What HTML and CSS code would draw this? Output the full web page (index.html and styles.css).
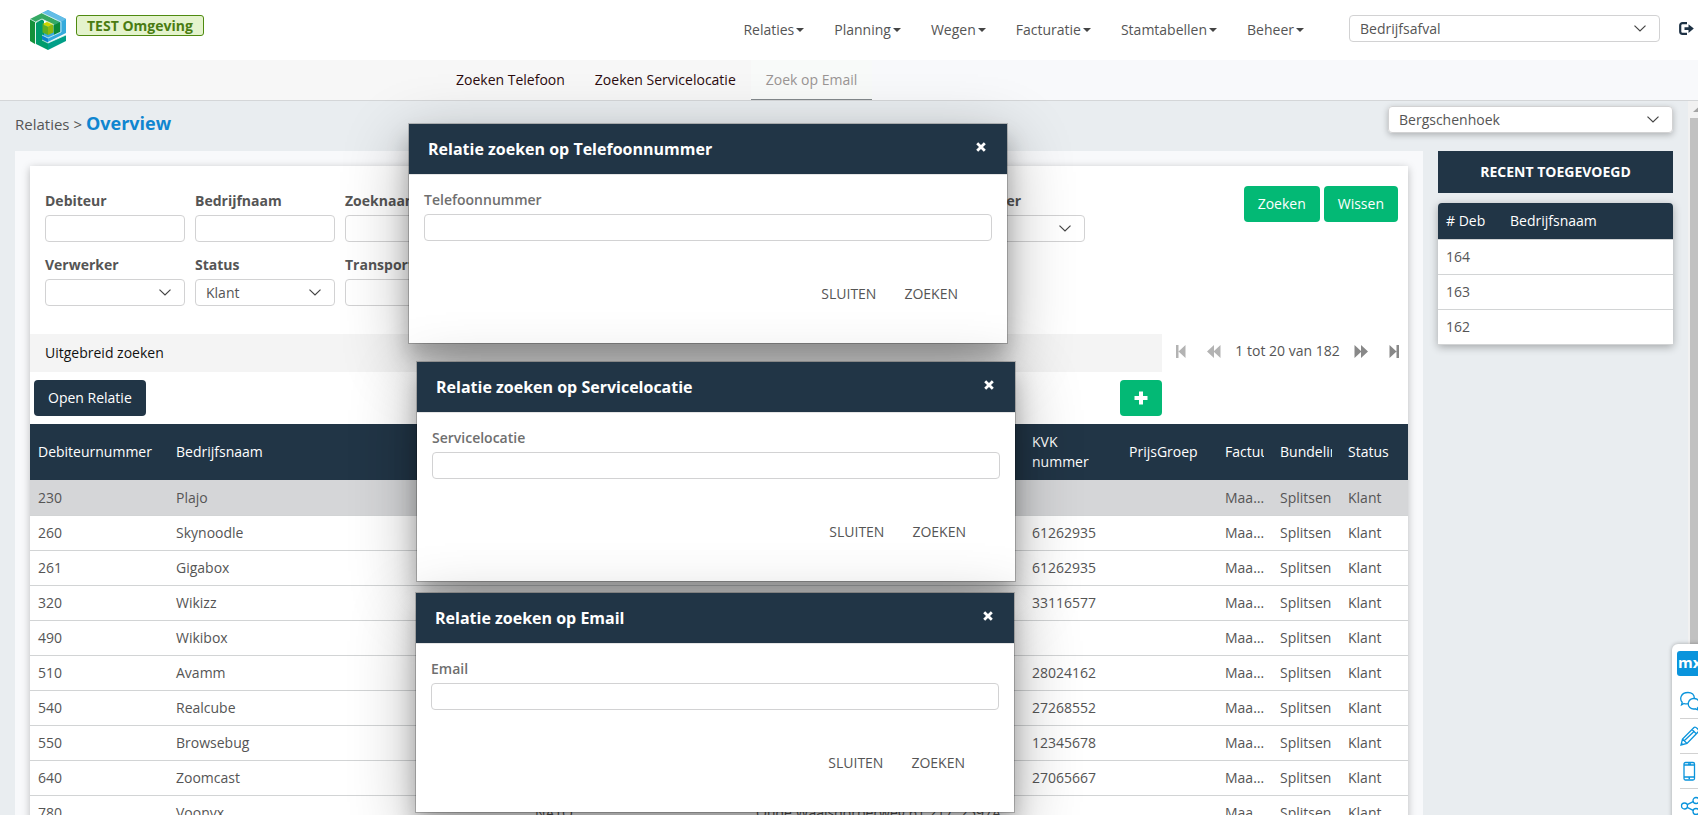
FILE: index.html
```html
<!DOCTYPE html>
<html lang="nl">
<head>
<meta charset="utf-8">
<title>Relaties - Overview</title>
<link rel="stylesheet" href="styles.css">
</head>
<body>
<svg class="defs" width="0" height="0" aria-hidden="true">
  <symbol id="chev" viewBox="0 0 12 7"><path d="M.5.6 6 6l5.500-5.400" fill="none" stroke="#444" stroke-width="1.200"/></symbol>
  <symbol id="cross" viewBox="0 0 10 10"><path d="M1.200 1.200l7.600 7.600M8.800 1.200L1.200 8.800" stroke="#fff" stroke-width="2.800"/></symbol>
</svg>
<header class="topbar">
  <svg class="logo" viewBox="0 0 36 40" width="36" height="40" aria-label="Logo">
    <path d="M18 0 36 9v14L18 32l-6-3V17l6-3 12-5L12 3z" fill="#35aadc"/>
    <path d="M12 3 18 0l18 9-5 3z" fill="#63bde6"/>
    <path d="M0 9 12 3l18 9-6 3-12-6-7 4z" fill="#35a964"/>
    <path d="M0 9l5 3v22l-5-3z" fill="#14913a"/>
    <path d="M6 13l6-4 2 2v18l4 4v7L6 34z" fill="#009b6b"/>
    <path d="M18 33l18-8v6L18 40z" fill="#009f87"/>
    <path d="M24 15l6-3v10l-6 3z" fill="#0b8a38"/>
    <path d="M12 25l6 3v5l-6-4z" fill="#0a80cc"/>
    <path d="M12.500 14 18 11.500l5.500 2.500L18 17z" fill="#cfd500"/>
    <path d="M12.500 14 18 17v8l-5.500-2.500z" fill="#5fae22"/>
    <path d="M23.500 14 18 17v8l5.500-2.500z" fill="#8fb80e"/>
    <path d="M0 9l5.500 3v22M5.500 12 12 9l12 6M12 3l19 9v10L18 28l-6-3M12 30l6 3 18-8" fill="none" stroke="#d9f1ee" stroke-width=".8"/>
  </svg>
  <span class="env">TEST Omgeving</span>
  <nav class="menu">
    <button>Relaties</button><button>Planning</button><button>Wegen</button><button>Facturatie</button><button>Stamtabellen</button><button>Beheer</button>
  </nav>
  <span class="pick stream"><select aria-label="Afvalstroom"><option>Bedrijfsafval</option></select><svg width="12" height="7"><use href="#chev"/></svg></span>
  <button class="logout" aria-label="Uitloggen"><svg width="15" height="13" viewBox="0 0 15 13"><path d="M8 1.100H3.500A2.300 2.300 0 0 0 1.200 3.400v6.200a2.300 2.300 0 0 0 2.300 2.300H8" fill="none" stroke="#1d3144" stroke-width="2.200"/><path d="M5.500 5.200H9.500V2.200l5.300 4.400L9.500 11V8h-4z" fill="#1d3144"/></svg></button>
</header>
<nav class="subnav">
  <a href="#telefoon">Zoeken Telefoon</a>
  <a href="#servicelocatie">Zoeken Servicelocatie</a>
  <a class="active" href="#email">Zoek op Email</a>
</nav>
<div class="body">
  <div class="page">
    <div class="crumbs">
      <div class="trail">Relaties &gt; <h1>Overview</h1></div>
      <span class="pick branch"><select aria-label="Vestiging"><option>Bergschenhoek</option></select><svg width="12" height="7"><use href="#chev"/></svg></span>
    </div>
    <div class="columns">
      <main class="frame">
        <section class="card">
          <form class="filters">
            <div class="fields">
              <div class="field"><label for="f1">Debiteur</label><input id="f1"></div>
              <div class="field"><label for="f2">Bedrijfnaam</label><input id="f2"></div>
              <div class="field"><label for="f3">Zoeknaam</label><input id="f3"></div>
              <div class="field last"><label for="f7">Ontdoener</label><span class="pick"><select id="f7"><option></option></select><svg width="12" height="7"><use href="#chev"/></svg></span></div>
              <div class="field"><label for="f8">Verwerker</label><span class="pick"><select id="f8"><option></option></select><svg width="12" height="7"><use href="#chev"/></svg></span></div>
              <div class="field"><label for="f9">Status</label><span class="pick"><select id="f9"><option>Klant</option></select><svg width="12" height="7"><use href="#chev"/></svg></span></div>
              <div class="field"><label for="f10">Transporteur</label><input id="f10"></div>
            </div>
            <div class="actions"><button class="btn green" type="button">Zoeken</button><button class="btn green" type="button">Wissen</button></div>
          </form>
          <div class="tools">
            <div class="toolsleft">
              <button class="extended">Uitgebreid zoeken</button>
              <div class="gridbtns"><button class="btn navy">Open Relatie</button><button class="btn green add" aria-label="Toevoegen"><svg width="14" height="14" viewBox="0 0 14 14"><path d="M7 .5v13M.5 7h13" stroke="#fff" stroke-width="4"/></svg></button></div>
            </div>
            <div class="pager">
              <button aria-label="Eerste" disabled><svg width="10" height="13" viewBox="0 0 10 13"><path d="M0 0h2.500v13H0zM9.500 0v13L2.500 6.500z"/></svg></button>
              <div class="pages">
                <button aria-label="Vorige" disabled><svg width="14" height="13" viewBox="0 0 14 13"><path d="M7 0v13L0 6.500zM13.500 0v13l-7-6.500z"/></svg></button>
                <span>1 tot 20 van 182</span>
                <button aria-label="Volgende"><svg width="14" height="13" viewBox="0 0 14 13"><path d="M.5 0v13l7-6.500zM7 0v13l7-6.500z"/></svg></button>
              </div>
              <button aria-label="Laatste"><svg width="10" height="13" viewBox="0 0 10 13"><path d="M7.500 0H10v13H7.500zM.5 0v13l7-6.500z"/></svg></button>
            </div>
          </div>
          <table class="grid">
            <colgroup><col class="c1"><col class="c2"><col class="c3"><col class="c4"><col class="c5"><col class="c6"><col class="c7"><col class="c8"><col class="c8"></colgroup>
            <thead><tr><th>Debiteurnummer</th><th>Bedrijfsnaam</th><th></th><th></th><th class="wrap">KVK nummer</th><th>PrijsGroep</th><th><span>Factuur</span></th><th><span>Bundeling</span></th><th>Status</th></tr></thead>
            <tbody>
              <tr class="sel"><td>230</td><td>Plajo</td><td></td><td></td><td></td><td></td><td>Maandelijks</td><td>Splitsen</td><td>Klant</td></tr>
              <tr><td>260</td><td>Skynoodle</td><td></td><td></td><td>61262935</td><td></td><td>Maandelijks</td><td>Splitsen</td><td>Klant</td></tr>
              <tr><td>261</td><td>Gigabox</td><td></td><td></td><td>61262935</td><td></td><td>Maandelijks</td><td>Splitsen</td><td>Klant</td></tr>
              <tr><td>320</td><td>Wikizz</td><td></td><td></td><td>33116577</td><td></td><td>Maandelijks</td><td>Splitsen</td><td>Klant</td></tr>
              <tr><td>490</td><td>Wikibox</td><td></td><td></td><td></td><td></td><td>Maandelijks</td><td>Splitsen</td><td>Klant</td></tr>
              <tr><td>510</td><td>Avamm</td><td></td><td></td><td>28024162</td><td></td><td>Maandelijks</td><td>Splitsen</td><td>Klant</td></tr>
              <tr><td>540</td><td>Realcube</td><td></td><td></td><td>27268552</td><td></td><td>Maandelijks</td><td>Splitsen</td><td>Klant</td></tr>
              <tr><td>550</td><td>Browsebug</td><td></td><td></td><td>12345678</td><td></td><td>Maandelijks</td><td>Splitsen</td><td>Klant</td></tr>
              <tr><td>640</td><td>Zoomcast</td><td></td><td></td><td>27065667</td><td></td><td>Maandelijks</td><td>Splitsen</td><td>Klant</td></tr>
              <tr><td>780</td><td>Voonyx</td><td>NATO</td><td>Oude Waalsdorperweg 61 217, 2597A</td><td></td><td></td><td>Maandelijks</td><td>Splitsen</td><td>Klant</td></tr>
            </tbody>
          </table>
        </section>
      </main>
      <aside class="side">
        <h2>RECENT TOEGEVOEGD</h2>
        <table class="recent">
          <thead><tr><th class="deb"># Deb</th><th>Bedrijfsnaam</th></tr></thead>
          <tbody><tr><td>164</td><td></td></tr><tr><td>163</td><td></td></tr><tr><td>162</td><td></td></tr></tbody>
        </table>
      </aside>
    </div>
  </div>
  <div class="scroll"><svg width="10" height="17" viewBox="0 0 10 17"><path d="M5 11l5-4.500V11z" fill="#a3a3a3"/></svg><div class="thumb"></div></div>
</div>

<div class="dialog d1" role="dialog" aria-labelledby="t1">
  <div class="dhead"><h3 id="t1">Relatie zoeken op Telefoonnummer</h3><button aria-label="Sluit venster"><svg width="10" height="10"><use href="#cross"/></svg></button></div>
  <form class="dbody"><label for="telefoon">Telefoonnummer</label><input id="telefoon"><div class="dfoot"><button type="button">SLUITEN</button><button type="button">ZOEKEN</button></div></form>
</div>
<div class="dialog d2" role="dialog" aria-labelledby="t2">
  <div class="dhead"><h3 id="t2">Relatie zoeken op Servicelocatie</h3><button aria-label="Sluit venster"><svg width="10" height="10"><use href="#cross"/></svg></button></div>
  <form class="dbody"><label for="servicelocatie">Servicelocatie</label><input id="servicelocatie"><div class="dfoot"><button type="button">SLUITEN</button><button type="button">ZOEKEN</button></div></form>
</div>
<div class="dialog d3" role="dialog" aria-labelledby="t3">
  <div class="dhead"><h3 id="t3">Relatie zoeken op Email</h3><button aria-label="Sluit venster"><svg width="10" height="10"><use href="#cross"/></svg></button></div>
  <form class="dbody"><label for="email">Email</label><input id="email"><div class="dfoot"><button type="button">SLUITEN</button><button type="button">ZOEKEN</button></div></form>
</div>

<div class="widget">
  <span class="mx">mx</span>
  <button aria-label="Feedback"><svg width="20" height="20" viewBox="0 0 20 20"><path d="M8.500 12.500c-1.600.6-3.200.6-4.500 0L1.500 14l.7-2.700C-.6 8.200.5 1.500 8 1.500c4 0 6.400 2.400 6.300 5.500"/><path d="M17.500 17c2-1.500 3-4 1.500-6.800-2.500-4-9-3.500-10.500 1-1.200 4.500 2.500 7.500 6.800 6.600l3 1.200z"/></svg></button>
  <button aria-label="Bewerken"><svg width="20" height="20" viewBox="0 0 20 20"><path d="M1 19l1.500-6L14 1.500c1.500-1.500 5.800 2.500 4.300 4.300L7 17.500zM2.500 13l4.500 4.500M12 3.500 16.500 8M4.500 14.500 14.500 5M1.500 17.500l1 1"/></svg></button>
  <button aria-label="Mobiel"><svg width="20" height="20" viewBox="0 0 20 20"><rect x="4" y="1.500" width="10.500" height="17.500" rx="1.500"/><path d="M4 4h10.500M4 16h10.500M8 2.800h3M8.500 17.500h1.500"/></svg></button>
  <button aria-label="Delen"><svg width="20" height="20" viewBox="0 0 20 20"><circle cx="4.500" cy="10" r="3"/><circle cx="16" cy="4.500" r="3"/><circle cx="16" cy="15.500" r="3"/><path d="M7.200 8.700l6-3M7.200 11.300l6 3"/></svg></button>
</div>
</body>
</html>
```
FILE: styles.css
```css
* { box-sizing: border-box; }
html, body { height: 100%; }
body {
  margin: 0; overflow: hidden; display: flex; flex-direction: column;
  font: 14px/20px "Open Sans", "Noto Sans", sans-serif; color: #555; background: #e9edf0;
}
button, input, select { font: inherit; color: inherit; }
button { border: 0; background: none; padding: 0; margin: 0; cursor: pointer; }
h1, h2, h3 { margin: 0; }
input, select {
  display: block; width: 100%; height: 27px; border: 1px solid #d2d2d3; border-radius: 4px;
  background: #fff; padding: 0 10px; appearance: none; outline: 0;
}
.defs { position: absolute; }

.topbar { height: 60px; flex: none; background: #fff; display: flex; align-items: flex-start; padding: 0 4px 0 30px; }
.logo { margin-top: 10px; flex: none; }
.env {
  margin: 15px auto 0 10px; height: 21px; padding: 0 10px; border: 1px solid #4f8a10; border-radius: 3px;
  background: #e4f3cd; color: #4a7c12; font-weight: 700; line-height: 20px;
}
.menu { display: flex; gap: 30px; margin: 20px 45px 0 0; white-space: nowrap; }
.menu button { display: flex; align-items: center; gap: 2px; line-height: 20px; }
.menu button::after { content: ""; border: 4px solid transparent; border-top-color: #444; border-bottom: 0; }
.pick { position: relative; display: block; }
.pick svg { position: absolute; right: 14px; top: 10px; pointer-events: none; }
.stream { width: 311px; margin: 15px 19px 0 0; }
.logout { margin-top: 22px; display: flex; }

.subnav { height: 41px; flex: none; display: flex; padding-left: 441px; border-bottom: 1px solid #d4d6d8; background: linear-gradient(90deg, #f7f7f7 45%, #f8f9fb 50%); }
.subnav a { padding: 10px 15px; height: 40px; color: #2b0b0e; text-decoration: none; }
.subnav .active { color: #9a9594; background: #f8faf9; border-bottom: 1px solid #83898c; }

.body { flex: 1; min-height: 0; display: flex; }
.page { flex: 1; min-width: 0; padding: 5px 15px 0; display: flex; flex-direction: column; }
.crumbs { flex: none; display: flex; justify-content: space-between; height: 45px; }
.trail { display: flex; align-items: baseline; gap: 4px; font-size: 15px; line-height: 34px; }
.trail h1 { font-size: 18px; font-weight: 700; color: #0f86d0; }
.branch { width: 285px; height: 27px; border-radius: 4px; box-shadow: 0 2px 6px rgba(0, 0, 0, .25); }
.scroll { flex: none; width: 10px; background: #f1f1f1; }
.scroll svg { display: block; }
.thumb { margin-left: 2px; height: 100%; background: #c1c1c1; }

.columns { flex: 1; min-height: 0; display: flex; gap: 15px; }
.frame { flex: 1; min-width: 0; background: #f8f9fb; padding: 15px 15px 0; overflow: hidden; }
.card { background: #fff; min-height: 100%; box-shadow: 0 2px 8px rgba(0, 0, 0, .25); }
.filters { display: flex; justify-content: space-between; align-items: flex-start; padding: 20px 10px 28px 15px; }
.fields { display: grid; grid-template-columns: repeat(7, 140px); gap: 13px 10px; padding-top: 5px; }
.field label { display: block; margin-bottom: 4px; font-weight: 700; }
.last { grid-column: 7; }
.actions { display: flex; gap: 4px; }
.btn { height: 36px; padding: 0 14px; border-radius: 4px; color: #fff; display: flex; align-items: center; justify-content: center; }
.green { background: #03b975; }
.navy { background: #213546; }
.tools { display: flex; align-items: flex-start; }
.toolsleft { flex: 1; }
.extended { display: block; width: 100%; height: 38px; padding: 0 15px; text-align: left; background: #f4f4f4; color: #111; }
.gridbtns { display: flex; justify-content: space-between; padding: 8px 0 8px 4px; }
.add { width: 42px; padding: 0; }
.pager { width: 246px; height: 34px; padding: 0 9px 0 14px; display: flex; align-items: center; justify-content: space-between; }
.pages { display: flex; align-items: center; gap: 14px; }
.pager button { display: flex; fill: #888; }
.pager button:disabled { fill: #b3b3b3; }

table { border-collapse: separate; border-spacing: 0; table-layout: fixed; width: 100%; }
th, td { text-align: left; padding: 0 8px; overflow: hidden; white-space: nowrap; }
th { color: #fff; background: #213546; font-weight: 400; }
th span { display: block; overflow: hidden; }
.grid th { height: 56px; }
.grid .wrap { white-space: normal; }
td { height: 35px; padding-right: 4px; border-bottom: 1px solid #d2d4d5; text-overflow: ellipsis; background: #fff; }
.sel td { height: 36px; background: #d5d6d8; }
.c1 { width: 138px; }
.c3 { width: 221px; }
.c4 { width: 276px; }
.c5 { width: 97px; }
.c6 { width: 96px; }
.c7 { width: 55px; }
.c8 { width: 68px; }

.side { flex: none; width: 235px; }
.side h2 { background: #213546; color: #fff; font-size: 14px; font-weight: 700; line-height: 42px; text-align: center; margin-bottom: 10px; }
.recent { border-radius: 4px 4px 0 0; box-shadow: 0 2px 8px rgba(0, 0, 0, .3); }
.recent th { height: 37px; border-bottom: 1px solid #d2d4d5; }
.recent th:first-child { border-top-left-radius: 4px; }
.recent th:last-child { border-top-right-radius: 4px; }
.deb { width: 64px; }

.dialog {
  position: absolute; width: 600px; background: #fff; background-clip: padding-box;
  border: 1px solid rgba(0, 0, 0, .2);
  box-shadow: 0 19px 60px rgba(0, 0, 0, .3), 0 15px 20px rgba(0, 0, 0, .22);
}
.d1 { left: 408px; top: 123px; }
.d2 { left: 416px; top: 361px; }
.d3 { left: 415px; top: 592px; }
.dhead { height: 51px; padding: 0 21px 0 19px; background: #213546; border-bottom: 1px solid #e5e5e5; display: flex; align-items: center; justify-content: space-between; }
.dhead h3 { color: #fff; font-size: 16px; font-weight: 700; }
.dhead button { display: flex; padding-bottom: 4px; }
.dbody { padding: 15px 15px 39px; }
.dbody label { display: block; margin-bottom: 4px; font-weight: 600; color: #6f6f6f; }
.dfoot { display: flex; justify-content: flex-end; gap: 28px; padding: 43px 34px 0 0; }

.widget {
  position: fixed; right: -8px; top: 644px; bottom: -8px; width: 34px; padding: 7px 0 0 5px; background: #fff;
  border-radius: 6px; box-shadow: 0 0 4px rgba(0, 0, 0, .3);
}
.mx { display: block; height: 25px; margin-bottom: 8px; border-radius: 3px; background: #0a94dc; color: #fff; font: 700 15px/22px "Open Sans", sans-serif; padding-left: 1px; }
.widget button { display: flex; align-items: center; margin-left: 3px; width: 26px; height: 35px; border-bottom: 1px solid #d2d2d2; }
.widget svg { fill: none; stroke: #0a94dc; stroke-width: 1.3; flex: none; }
```
